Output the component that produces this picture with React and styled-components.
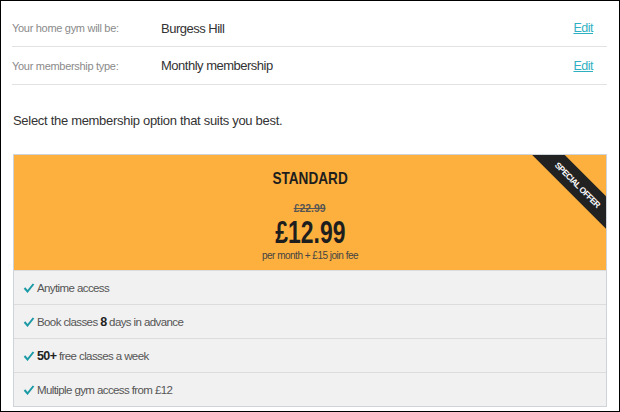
import React from 'react'
import styled, { createGlobalStyle } from 'styled-components'

const Global = createGlobalStyle`
    html, body {
        margin: 0;
        padding: 0;
        background: #fff;
    }
    * { box-sizing: border-box; }
`

const font = `"Liberation Sans", Arial, sans-serif`

const Frame = styled.div`
    width: 620px;
    height: 412px;
    border: 1px solid #000;
    overflow: hidden;
    padding: 9px 12px 0 11px;
    font-family: ${font};
    color: #333;
    background: #fff;
`

const InfoRow = styled.div`
    display: flex;
    align-items: center;
    height: 37px;
    border-bottom: 1px solid #e2e2e2;
    padding-right: 14px;
    &:nth-child(2) { height: 38px; }
`

const Label = styled.div`
    width: 149px;
    font-size: 11px;
    letter-spacing: -0.3px;
    color: #8a8a8a;
`

const Value = styled.div`
    flex: 1;
    font-size: 13px;
    letter-spacing: -0.5px;
    color: #333;
`

const EditLink = styled.a`
    font-size: 12.5px;
    letter-spacing: -0.5px;
    color: #2fb0c2;
    text-decoration: underline;
    cursor: pointer;
`

const Intro = styled.p`
    margin: 28px 0 26px 1px;
    font-size: 13px;
    letter-spacing: -0.3px;
    color: #333;
`

const Card = styled.div`
    border: 1px solid #cfd3da;
    margin-left: 1px;
`

const Header = styled.div`
    position: relative;
    overflow: hidden;
    background: #fdb03d;
    height: 115px;
    display: flex;
    flex-direction: column;
    align-items: center;
    color: #1e1e1e;
`

const Condensed = styled.div`
    display: inline-block;
    font-weight: bold;
    transform: scaleX(${p => p.$scale});
`

const PlanName = styled(Condensed)`
    margin-top: 15px;
    font-size: 17px;
    line-height: 18px;
`

const OldPrice = styled(Condensed)`
    margin-top: 14px;
    font-size: 11.5px;
    line-height: 12px;
    color: #555;
    text-decoration: line-through;
`

const Price = styled(Condensed)`
    margin-top: 4px;
    font-size: 31px;
    line-height: 29px;
`

const Terms = styled.div`
    margin-top: 3px;
    font-size: 10px;
    letter-spacing: -0.5px;
    color: #444;
`

const Ribbon = styled.div`
    position: absolute;
    top: 18px;
    right: -32px;
    width: 120px;
    height: 23px;
    background: #222;
    color: #fff;
    transform: rotate(45deg);
    display: flex;
    align-items: center;
    justify-content: center;
    font-size: 8.5px;
    font-weight: bold;
    letter-spacing: -0.6px;
`

const Feature = styled.div`
    display: flex;
    align-items: center;
    gap: 2px;
    height: 34px;
    padding-left: 9px;
    background: #f1f1f1;
    border-top: 1px solid #dcdcdc;
    font-size: 11.5px;
    letter-spacing: -0.6px;
    color: #555;
    b { color: #222; font-size: 12.5px; }
`

const Check = () => (
    <svg width="12" height="10" viewBox="0 0 12 10">
        <path d="M1.5 5 L4.5 8.5 L10.5 1" fill="none" stroke="#1b9aa6" strokeWidth="2" />
    </svg>
)

const features = [
    <>Anytime access</>,
    <>Book classes <b>8</b> days in advance</>,
    <><b>50+</b> free classes a week</>,
    <>Multiple gym access from £12</>,
]

function App() {
    return (
        <Frame>
            <Global />
            <InfoRow>
                <Label>Your home gym will be:</Label>
                <Value>Burgess Hill</Value>
                <EditLink>Edit</EditLink>
            </InfoRow>
            <InfoRow>
                <Label>Your membership type:</Label>
                <Value>Monthly membership</Value>
                <EditLink>Edit</EditLink>
            </InfoRow>
            <Intro>Select the membership option that suits you best.</Intro>
            <Card>
                <Header>
                    <PlanName $scale={0.8}>STANDARD</PlanName>
                    <OldPrice $scale={0.9}>£22.99</OldPrice>
                    <Price $scale={0.74}>£12.99</Price>
                    <Terms>per month + £15 join fee</Terms>
                    <Ribbon>SPECIAL OFFER</Ribbon>
                </Header>
                {features.map((f, i) => (
                    <Feature key={i}>
                        <Check />
                        <span>{f}</span>
                    </Feature>
                ))}
            </Card>
        </Frame>
    )
}

export default App
